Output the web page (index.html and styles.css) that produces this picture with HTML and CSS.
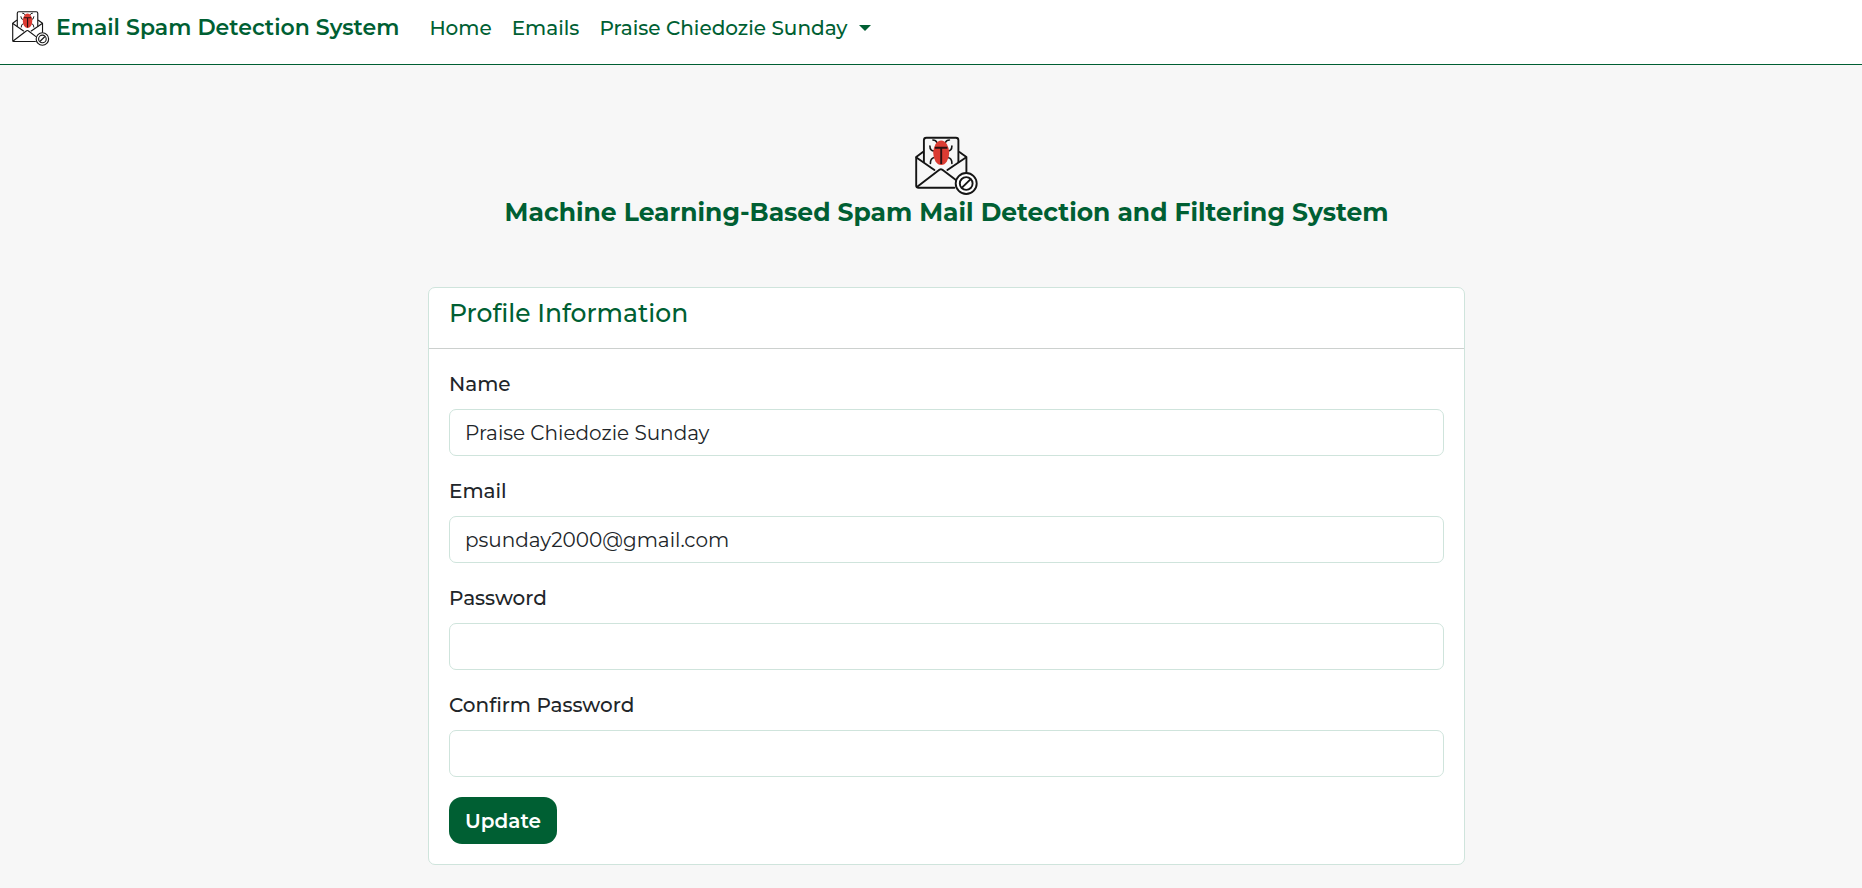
FILE: index.html
```html
<!DOCTYPE html>
<html lang="en">
<head>
<meta charset="utf-8">
<meta name="viewport" content="width=device-width, initial-scale=1">
<title>Email Spam Detection System</title>
<link rel="stylesheet" href="styles.css">
</head>
<body>
<svg class="sprite" aria-hidden="true">
  <symbol id="logo" viewBox="0.600 0 64 60">
    <g fill="none" stroke="#151515" stroke-width="1.900" stroke-linecap="round" stroke-linejoin="round">
      <path d="M9.500 27V5.200q0-2.500 2.500-2.500h29.500q2.500 0 2.500 2.500V27"/>
      <path d="M8.500 17 1.800 22v28.500q0 2.200 2.200 2.200h36"/>
      <path d="m45 17 7 5v15"/>
      <path d="M2 22.500 20 35M51.500 22.500 33 35M2.500 52 24 35.500q2.500-2.500 5 0L41.500 45"/>
      <path stroke-width="1.600" d="M18.500 5q3 0 4 2.500M35 5q-3 0-4 2.500M15.500 11q0 5 4.500 5M37.500 11q0 5-4.500 5M16 28.500q0-5.500 4-6M37.500 28.500q0-5.500-4-6"/>
    </g>
    <ellipse cx="26.800" cy="17.800" rx="8" ry="12.200" fill="#db3b32"/>
    <path d="M20.500 12.700h12.500M26.800 12.700V29" stroke="#2b1010" stroke-width="1.900"/>
    <g fill="#fff" stroke="#151515" stroke-width="1.900">
      <circle cx="51.800" cy="48.500" r="10.500"/>
      <circle cx="51.800" cy="48.500" r="6.400"/>
      <path d="m47.600 52.700 8.400-8.400"/>
    </g>
  </symbol>
</svg>
<header class="navbar">
  <a class="brand" href="#"><svg class="brand-logo" aria-hidden="true"><use href="#logo"/></svg>Email Spam Detection System</a>
  <nav class="nav">
    <a href="#">Home</a>
    <a href="#">Emails</a>
    <button class="user-menu" type="button">Praise Chiedozie Sunday<span class="caret"></span></button>
  </nav>
</header>
<main class="page">
  <div class="intro">
    <svg class="intro-logo" aria-hidden="true"><use href="#logo"/></svg>
    <h1>Machine Learning-Based Spam Mail Detection and Filtering System</h1>
  </div>
  <section class="card">
    <h2 class="card-header">Profile Information</h2>
    <form class="card-body">
      <div class="field"><label for="name">Name</label><input id="name" type="text" value="Praise Chiedozie Sunday"></div>
      <div class="field"><label for="email">Email</label><input id="email" type="email" value="psunday2000@gmail.com"></div>
      <div class="field"><label for="password">Password</label><input id="password" type="password"></div>
      <div class="field"><label for="confirm">Confirm Password</label><input id="confirm" type="password"></div>
      <button class="update" type="submit">Update</button>
    </form>
  </section>
</main>
</body>
</html>
```
FILE: styles.css
```css
* { box-sizing: border-box; }
body {
  margin: 0;
  background: #f7f7f7;
  color: #212529;
  font: 500 20px/30px Montserrat, Inter, sans-serif;
}
.sprite { position: absolute; width: 0; height: 0; }
.navbar {
  display: flex;
  align-items: flex-start;
  gap: 30px;
  padding: 8px 12px 16px;
  background: #fff;
  border-bottom: 1px solid #005f33;
}
.brand {
  display: flex;
  gap: 6px;
  color: #005f33;
  font-size: 22px;
  font-weight: 600;
  line-height: 40px;
  text-decoration: none;
}
.brand-logo { width: 38px; height: 40px; }
.nav { display: flex; gap: 20px; line-height: 40px; }
.nav a, .user-menu { color: #005f33; text-decoration: none; }
.user-menu {
  display: flex;
  align-items: center;
  gap: 12px;
  padding: 0;
  border: 0;
  background: none;
  font: inherit;
}
.caret {
  border: 6px solid transparent;
  border-top-color: #005f33;
  border-bottom: 0;
}
.page { padding: 70px 0 24px 31px; }
.intro {
  display: flex;
  flex-direction: column;
  align-items: center;
  margin-bottom: 58px;
  color: #005f33;
}
.intro-logo { width: 64px; height: 60px; }
h1 { margin: 0; font-size: 25px; font-weight: 700; line-height: 34px; }
.card {
  max-width: 1037px;
  margin: 0 auto;
  background: #fff;
  border: 1px solid #cfe4dc;
  border-radius: 7px;
}
.card-header {
  margin: 0;
  padding: 9px 20px 19px;
  border-bottom: 1px solid #ccd0ce;
  color: #005f33;
  font-size: 25px;
  font-weight: 500;
  line-height: 32px;
}
.card-body {
  display: flex;
  flex-direction: column;
  align-items: flex-start;
  gap: 20px;
  padding: 20px;
}
.field { display: flex; flex-direction: column; gap: 10px; width: 100%; }
.field input {
  width: 100%;
  height: 47px;
  padding: 8px 15px;
  border: 1px solid #cfe4dc;
  border-radius: 7px;
  background: #fff;
  color: #212529;
  font: inherit;
  font-weight: 400;
}
.update {
  height: 47px;
  padding: 8px 16px;
  border: 0;
  border-radius: 13px;
  background: #005f33;
  color: #fff;
  font: inherit;
  font-weight: 600;
}
```
